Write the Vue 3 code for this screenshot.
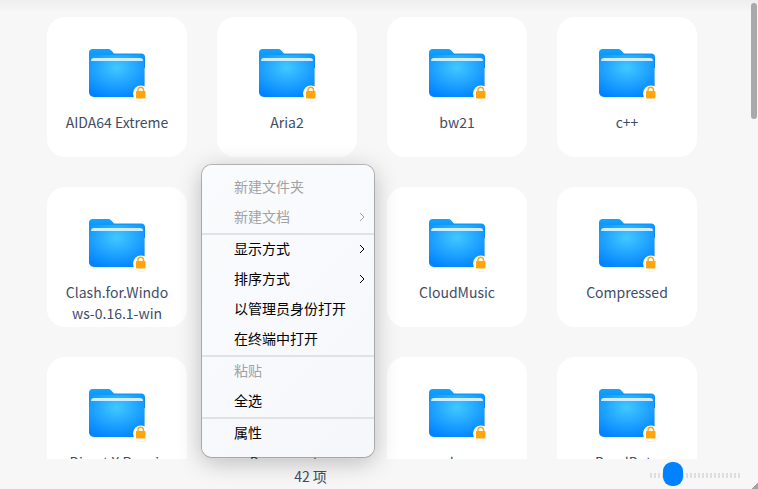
<script setup>
const rows = [
  { name: 'AIDA64 Extreme' },
  { name: 'Aria2' },
  { name: 'bw21' },
  { name: 'c++' },
  { name: 'Clash.for.Windows-0.16.1-win' },
  { name: 'CodeBlocks' },
  { name: 'CloudMusic' },
  { name: 'Compressed' },
  { name: 'Direct X Repair' },
  { name: 'Documents' },
  { name: 'dev' },
  { name: 'DeadData' },
]
const menu = [
  [
    { label: '新建文件夹', off: true },
    { label: '新建文档', off: true, sub: true },
  ],
  [
    { label: '显示方式', sub: true },
    { label: '排序方式', sub: true },
    { label: '以管理员身份打开' },
    { label: '在终端中打开' },
  ],
  [
    { label: '粘贴', off: true },
    { label: '全选' },
  ],
  [{ label: '属性' }],
]
</script>

<template>
  <div class="window">
    <div class="files">
      <div class="grid">
        <div v-for="f in rows" :key="f.name" class="card">
          <svg class="folder" width="66" height="60" viewBox="0 0 66 60">
            <defs>
              <radialGradient id="fg" cx="50%" cy="30%" r="75%">
                <stop offset="0" stop-color="#42c8ff" />
                <stop offset="1" stop-color="#0183ff" />
              </radialGradient>
              <linearGradient id="bk" x1="0" y1="0" x2="0" y2="1">
                <stop offset="0" stop-color="#0fa5ff" />
                <stop offset="1" stop-color="#0a7bf0" />
              </linearGradient>
            </defs>
            <path d="M5 4.500C5 2.500 6.500 1 8.500 1H24c1.600 0 2.600.6 3.500 1.700L30 5.500H57.500C59.400 5.500 61 7 61 9V20H5Z" fill="url(#bk)" />
            <rect x="5" y="8" width="56" height="41.500" rx="5" fill="#000" opacity=".12" />
            <rect x="5" y="7" width="55.500" height="42" rx="5" fill="url(#fg)" />
            <path d="M7 13C7 11 8 10 10 10H56C58 10 59 11 59 13Z" fill="#cdeeff" />
            <circle cx="57" cy="46" r="8" fill="#000" opacity=".1" />
            <circle cx="57" cy="45.500" r="8" fill="#fff" />
            <rect x="52" y="43" width="9.500" height="7.500" rx=".8" fill="#ffa50a" />
            <path d="M54 43.500V41.500a2.800 2.800 0 0 1 5.500 0V43.500" fill="none" stroke="#ffa50a" stroke-width="1.400" />
          </svg>
          <div class="name">{{ f.name }}</div>
        </div>
      </div>
      <div class="topshade"></div>
      <div class="scrollbar"></div>
    </div>
    <div class="status">
      <span class="count">42 项</span>
      <div class="slider">
        <i v-for="n in 23" :key="n" class="tick"></i>
        <span class="thumb"></span>
      </div>
    </div>
    <div class="corner"></div>
    <div class="menu">
      <div v-for="(group, i) in menu" :key="i" class="group">
        <div v-for="m in group" :key="m.label" class="item" :class="{ off: m.off }">
          <span class="label">{{ m.label }}</span>
          <svg v-if="m.sub" class="chev" width="6" height="10" viewBox="0 0 6 10">
            <path d="M1 1l4 4-4 4" fill="none" stroke="currentColor" stroke-width="1" />
          </svg>
        </div>
      </div>
    </div>
  </div>
</template>

<style>
html, body { margin: 0; background: #f7f7f7; overflow: hidden; }
</style>

<style scoped>
.window {
  position: relative;
  width: 758px;
  height: 489px;
  overflow: hidden;
  background: #f7f7f7;
  font-family: "Noto Sans CJK SC", "Noto Sans", sans-serif;
  color: #414d68;
  font-size: 14px;
}
.files {
  position: relative;
  height: 459px;
  overflow: hidden;
}
.grid {
  display: grid;
  grid-template-columns: repeat(4, 140px);
  grid-auto-rows: 140px;
  gap: 30px;
  padding: 17px 0 0 47px;
}
.card {
  background: #fff;
  border-radius: 18px;
  display: flex;
  flex-direction: column;
  align-items: center;
  padding-top: 31px;
  box-sizing: border-box;
}
.folder { flex: none; }
.name {
  width: 108px;
  margin-top: 4px;
  text-align: center;
  line-height: 21px;
  word-break: break-all;
}
.topshade {
  position: absolute;
  left: 0;
  right: 0;
  top: 0;
  height: 12px;
  background: linear-gradient(#eeeeee, rgba(247, 247, 247, 0));
}
.scrollbar {
  position: absolute;
  left: 751px;
  top: 3px;
  width: 6px;
  height: 116px;
  border-radius: 3px;
  background: #a9a9a9;
}
.status {
  position: relative;
  height: 30px;
  display: flex;
  align-items: center;
  justify-content: center;
}
.count { margin-left: -137px; margin-top: 3px; }
.slider {
  position: absolute;
  left: 650px;
  top: 14px;
  width: 92px;
  height: 5px;
  display: flex;
  gap: 2px;
}
.tick { width: 2px; height: 5px; background: #dedede; }
.thumb {
  position: absolute;
  left: 13px;
  top: -11px;
  width: 20px;
  height: 24px;
  border-radius: 9px;
  background: #0081ff;
}
.corner {
  position: absolute;
  right: 0;
  bottom: 0;
  width: 7px;
  height: 7px;
  background: linear-gradient(135deg, transparent 50%, #a3a3a3 50%);
}
.menu {
  position: absolute;
  left: 202px;
  top: 165px;
  width: 172px;
  height: 292px;
  box-sizing: border-box;
  padding: 8px 0;
  border-radius: 10px;
  background: linear-gradient(135deg, #fafbfd, #f5f7fb);
  box-shadow: 0 0 0 1px rgba(0, 0, 0, .22), 0 5px 24px rgba(0, 0, 0, .26);
  color: #000;
}
.group + .group { border-top: 2px solid #e1e2e6; }
.item {
  height: 30px;
  display: flex;
  align-items: center;
  justify-content: space-between;
  padding: 0 9px 0 32px;
  line-height: 1;
}
.label { margin-bottom: 4px; }
.chev { margin-bottom: 2px; flex: none; }
.off { color: #a2a2a2; }
</style>
